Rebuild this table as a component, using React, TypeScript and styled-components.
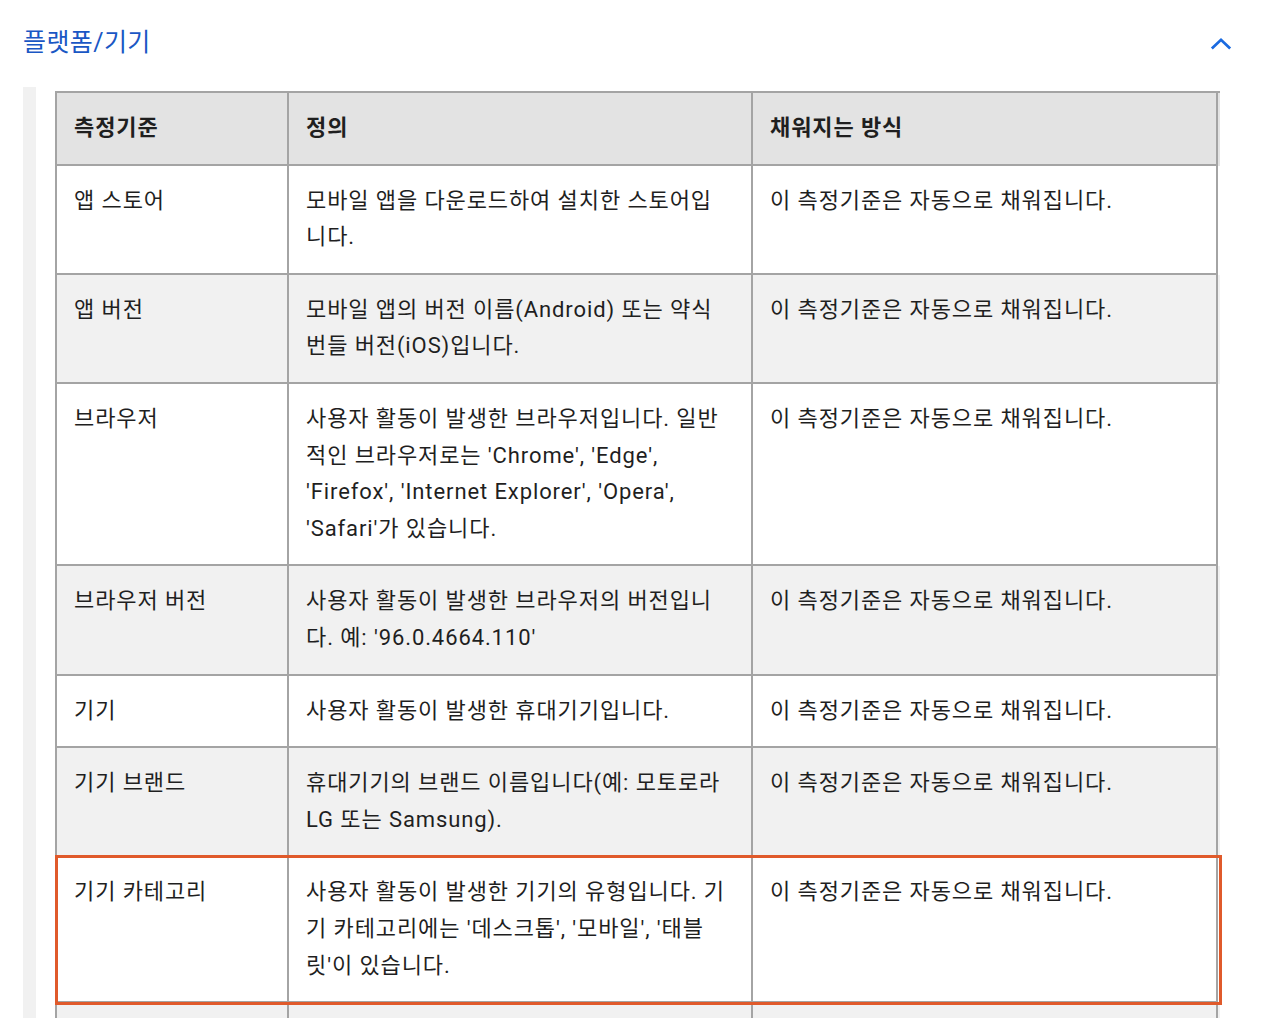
import styled, { createGlobalStyle } from 'styled-components'

const GlobalStyle = createGlobalStyle`
  html, body {
    margin: 0;
    padding: 0;
    background: #fff;
  }
  body {
    font-family: Roboto, 'Noto Sans CJK KR', sans-serif;
    color: #1f1f1f;
    overflow: hidden;
  }
`

const Page = styled.div`
  width: 1280px;
  height: 1018px;
  overflow: hidden;
`

const Header = styled.div`
  display: flex;
  align-items: center;
  justify-content: space-between;
  height: 87px;
  padding: 0 47px 0 23px;
  box-sizing: border-box;
`

const Title = styled.h3`
  margin: 0 0 8px;
  font-family: Roboto, 'Noto Sans CJK KR', sans-serif;
  font-weight: 400;
  font-size: 25px;
  letter-spacing: 0.4px;
  color: #1a57c4;
`

const Toggle = styled.button`
  display: flex;
  align-items: center;
  justify-content: center;
  width: 24px;
  height: 24px;
  padding: 0;
  border: 0;
  background: none;
  svg {
    width: 22px;
    height: 22px;
  }
`

const Section = styled.div`
  margin-left: 23px;
  border-left: 13px solid #f1f1f1;
  padding: 4px 0 0 19px;
  min-height: 940px;
`

const Table = styled.div`
  width: 1163px;
  border-top: 2px solid #a4a4a4;
  border-left: 2px solid #a4a4a4;
  font-size: 22px;
  line-height: 36.6px;
  letter-spacing: 0.9px;
`

const Row = styled.div<{ $head?: boolean; $shade?: boolean; $marked?: boolean }>`
  display: grid;
  grid-template-columns: 232px 464px 465px;
  background: ${({ $head, $shade }) =>
    $head ? '#e3e3e3' : $shade ? '#f1f1f1' : '#fff'};
  font-weight: ${({ $head }) => ($head ? 700 : 400)};
  ${({ $marked }) =>
    $marked &&
    `
    outline: 3px solid #e05a2b;
    outline-offset: -1px;
    position: relative;
    z-index: 1;
  `}
`

const Cell = styled.div`
  padding: 17px 18px 17px 17px;
  border-right: 2px solid #a4a4a4;
  border-bottom: 2px solid #a4a4a4;
  word-break: normal;
  overflow-wrap: anywhere;
`

const rows: [string, string][] = [
  ['앱 스토어', '모바일 앱을 다운로드하여 설치한 스토어입니다.'],
  ['앱 버전', '모바일 앱의 버전 이름(Android) 또는 약식 번들 버전(iOS)입니다.'],
  [
    '브라우저',
    "사용자 활동이 발생한 브라우저입니다. 일반적인 브라우저로는 'Chrome', 'Edge', 'Firefox', 'Internet Explorer', 'Opera', 'Safari'가 있습니다.",
  ],
  ['브라우저 버전', "사용자 활동이 발생한 브라우저의 버전입니다. 예: '96.0.4664.110'"],
  ['기기', '사용자 활동이 발생한 휴대기기입니다.'],
  ['기기 브랜드', '휴대기기의 브랜드 이름입니다(예: 모토로라 LG 또는 Samsung).'],
  [
    '기기 카테고리',
    "사용자 활동이 발생한 기기의 유형입니다. 기기 카테고리에는 '데스크톱', '모바일', '태블릿'이 있습니다.",
  ],
  ['기기 모델', '휴대기기의 모델 이름입니다.'],
]

const FILLED = '이 측정기준은 자동으로 채워집니다.'

export default function App(): JSX.Element {
  return (
    <Page>
      <GlobalStyle />
      <Header>
        <Title>플랫폼/기기</Title>
        <Toggle aria-label="접기">
          <svg viewBox="0 0 24 24" fill="none">
            <path
              d="M2 17 L12 7.5 L22 17"
              stroke="#1a6ae0"
              strokeWidth="3"
            />
          </svg>
        </Toggle>
      </Header>
      <Section>
        <Table>
          <Row $head>
            <Cell>측정기준</Cell>
            <Cell>정의</Cell>
            <Cell>채워지는 방식</Cell>
          </Row>
          {rows.map(([name, desc], index) => (
            <Row key={name} $shade={index % 2 === 1} $marked={index === 6}>
              <Cell>{name}</Cell>
              <Cell>{desc}</Cell>
              <Cell>{FILLED}</Cell>
            </Row>
          ))}
        </Table>
      </Section>
    </Page>
  )
}
